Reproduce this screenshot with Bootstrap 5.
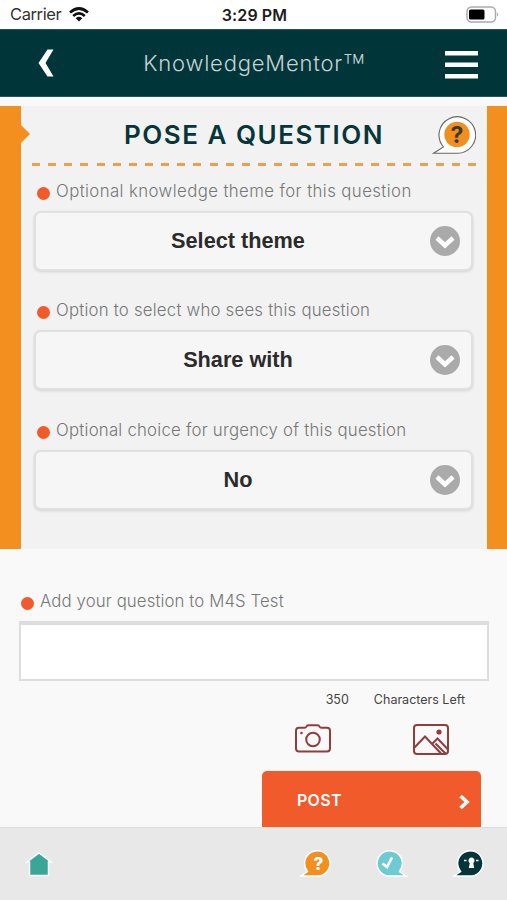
<!DOCTYPE html>
<html lang="en">
<head>
<meta charset="utf-8">
<meta name="viewport" content="width=device-width, initial-scale=1">
<title>KnowledgeMentor</title>
<link href="https://cdn.jsdelivr.net/npm/bootstrap@5.3.0/dist/css/bootstrap.min.css" rel="stylesheet">
<style>
body{background:#f9f9f9;font-family:Inter,"Open Sans",sans-serif;height:900px;overflow:hidden}
svg{display:block;flex:none}
.status{height:29px;background:#fff;font-size:16.5px;color:#333;display:grid;grid-template-columns:1fr auto 1fr;padding:0 8px 0 10px}
.status .carrier{letter-spacing:-.4px}
.status .clock{font-weight:600;color:#1c1c1c;font-size:16px;letter-spacing:.1px}
.topbar{height:68px;background:#003539;padding:0 29px 0 37px;border-top:1px solid #285458;border-bottom:1px solid #285458}
.topbar .brand{font-weight:300;font-size:22px;color:#c6d3d5;letter-spacing:.8px;white-space:nowrap;margin-left:8px}
.brand .tm{font-size:37px;font-weight:200;line-height:0;vertical-align:-10px;letter-spacing:0}
.panel{margin-top:9px;height:443px;border-left:21px solid #f28f1f;border-right:20px solid #f28f1f;background:#f2f2f2;padding:0 11px 0 11px}
.panel:before{content:"";position:absolute;left:0;top:19px;border:9.5px solid transparent;border-left:9px solid #f28f1f;border-right:0}
.heading{height:57px;padding:0 0 0 92px}
.heading h1{font-size:26px;font-weight:600;color:#07363a;letter-spacing:1.5px;white-space:nowrap}
.dashes{height:3px;width:444px;background:repeating-linear-gradient(90deg,#eba04a 0 8px,transparent 8px 16.15px)}
.fields{padding-top:13px}
.field-label{font-weight:300;font-size:16.8px;color:#777;height:24px;line-height:24px;white-space:nowrap}
.ls-a{letter-spacing:.4px}
.ls-b{letter-spacing:.21px}
.ls-c{letter-spacing:.22px}
.ls-d{letter-spacing:.1px}
.dot{width:13px;height:13px;border-radius:50%;background:#f15a2b;margin-right:6px;flex:none}
.picker{width:439px;height:60px;border:2px solid #e0e0e0;border-radius:7px;background:#f6f6f6;box-shadow:0 1px 3px #0002;font:bold 21.7px/1 "Liberation Sans",Arial,sans-serif;color:#2b2b2b;padding:0 11px 0 6px}
.field{height:119.3px;padding-left:5px}
.field .picker{margin:8px 0 0 -3px}
.ask{padding:40px 18px 0 19px}
.ask .field-label{padding-left:2px}
.entry{height:60px;border:2px solid #ddd;border-top:4px solid #ddd;border-radius:0;resize:none;background:#fff}
.counter{height:37px;padding-top:1px;font-size:12.5px;color:#444;gap:25px;padding-right:24px}
.media{height:53px;padding:6px 40px 0 276px}
.post{width:219px;height:56px;border-radius:5px 5px 0 0;border:0;background:#f15a2b;color:#fff;font-size:16px;font-weight:600;padding:2px 11px 0 35px;margin-right:8px}
.post span{letter-spacing:.3px}
.dock{height:73px;background:#e8e8e8;border-top:1px solid #ddd;padding:0 21px 0 25px}
.bubble-a{margin-right:41px}
.bubble-b{margin-right:44px}
</style>
<script src="https://cdn.jsdelivr.net/npm/bootstrap@5.3.0/dist/js/bootstrap.bundle.min.js"></script>
</head>
<body>
<div class="status align-items-center">
  <div class="d-flex align-items-center gap-2"><span class="carrier">Carrier</span>
    <svg width="20" height="15" viewBox="0 0 20 15" fill="none" stroke="#111" stroke-width="2.7"><path d="M1 5.5Q10-2.5 19 5.5M4.2 9Q10 3.9 15.8 9"/><path d="M6.7 11.2Q10 8.4 13.3 11.2L10 14.6Z" fill="#111" stroke="none"/></svg>
  </div>
  <span class="clock">3:29 PM</span>
  <svg class="ms-auto" width="33" height="17" viewBox="0 0 33 17"><rect x="1" y="1" width="28.5" height="15" rx="4.5" fill="#fff" stroke="#aaa" stroke-width="1.5"/><rect x="3" y="3.5" width="15.5" height="10" rx="1.5"/><path d="M31 6.5q2.400 2 0 4z" fill="#aaa"/></svg>
</div>
<header class="topbar d-flex align-items-center justify-content-between">
  <svg width="18" height="28" viewBox="0 0 18 28"><path d="M10.500 .5H16.500L8.500 14 16.500 27.500H10.500L1.500 14Z" fill="#fff"/></svg>
  <span class="brand">KnowledgeMentor<span class="tm">™</span></span>
  <svg class="mt-1" width="33" height="28" viewBox="0 0 33 28" fill="#fff"><path d="M0 0h33v4.500H0zM0 11.500h33V16H0zM0 23h33v4.500H0z"/></svg>
</header>
<main>
<section class="panel position-relative">
  <div class="heading d-flex align-items-center justify-content-between">
    <h1 class="m-0">POSE A QUESTION</h1>
    <svg width="44" height="40" viewBox="0 0 44 40"><path d="M1.500 38.300L11.500 32A18.300 18.300 0 1 1 25 38.300Z" fill="#fff" stroke="#666" stroke-width="1.1"/><circle cx="25" cy="19.500" r="12.700" fill="#f28f1f"/><text x="25" y="28" text-anchor="middle" font-family="Inter,sans-serif" font-weight="700" font-size="23" fill="#3d3b30">?</text></svg>
  </div>
  <div class="dashes"></div>
  <div class="fields">
    <div class="field"><div class="field-label d-flex"><i class="dot mt-2"></i><span class="ls-a">Optional knowledge theme for this question</span></div>
      <button class="picker d-flex align-items-center"><span class="flex-fill ps-1">Select theme</span><svg width="30" height="30" viewBox="0 0 30 30"><circle cx="15" cy="15" r="15" fill="#aaa"/><path d="M7 12l8 7.500 8-7.500" fill="none" stroke="#fff" stroke-width="4.500"/></svg></button></div>
    <div class="field"><div class="field-label d-flex"><i class="dot mt-2"></i><span class="ls-b">Option to select who sees this question</span></div>
      <button class="picker d-flex align-items-center"><span class="flex-fill ps-1">Share with</span><svg width="30" height="30" viewBox="0 0 30 30"><circle cx="15" cy="15" r="15" fill="#aaa"/><path d="M7 12l8 7.500 8-7.500" fill="none" stroke="#fff" stroke-width="4.500"/></svg></button></div>
    <div class="field"><div class="field-label d-flex"><i class="dot mt-2"></i><span class="ls-c">Optional choice for urgency of this question</span></div>
      <button class="picker d-flex align-items-center"><span class="flex-fill ps-1">No</span><svg width="30" height="30" viewBox="0 0 30 30"><circle cx="15" cy="15" r="15" fill="#aaa"/><path d="M7 12l8 7.500 8-7.500" fill="none" stroke="#fff" stroke-width="4.500"/></svg></button></div>
  </div>
</section>
<section class="ask">
  <div class="field-label d-flex"><i class="dot mt-2"></i><span class="ls-d">Add your question to M4S Test</span></div>
  <textarea class="entry d-block w-100 mt-2" aria-label="Question"></textarea>
  <div class="counter d-flex align-items-center justify-content-end"><span>350</span><span>Characters Left</span></div>
  <div class="media d-flex justify-content-between">
    <svg width="36" height="30" viewBox="0 0 36 30" fill="none" stroke="#913d3d" stroke-width="2"><path d="M4 3.800H9.500Q11 3.800 11.500 2.500Q12 1.200 13.500 1.200H22.500Q24 1.200 24.500 2.500Q25 3.800 26.500 3.800H32Q35 3.800 35 6.800V24.500Q35 27.500 32 27.500H4Q1 27.500 1 24.500V6.800Q1 3.800 4 3.800Z"/><circle cx="18" cy="15.500" r="6.800"/><circle cx="6.500" cy="9" r="1.300" fill="#913d3d" stroke="none"/></svg>
    <svg width="36" height="31" viewBox="0 0 36 31" fill="none" stroke="#913d3d" stroke-width="2"><rect x="1" y="1" width="34" height="29" rx="3"/><path d="M1.500 23.500L12 12.500 28 29.500M19 20L24.500 14.500 35 25.500M22.500 19.500L32.500 29.500"/><circle cx="26" cy="8" r="2.600" fill="#913d3d" stroke="none"/></svg>
  </div>
  <button class="post d-flex align-items-center justify-content-between ms-auto"><span>POST</span><svg class="mt-1" width="12" height="16" viewBox="0 0 12 16"><path d="M2.500 2L9 8l-6.500 6" fill="none" stroke="#fff" stroke-width="3.700"/></svg></button>
</section>
</main>
<footer class="dock d-flex align-items-center">
  <svg width="28" height="27" viewBox="0 0 28 27"><path d="M14 2L26 11H23.500V24.500H4.500V11H2Z" fill="#3aa698" stroke="#f6fffd" stroke-width="1.500"/></svg>
  <svg class="ms-auto bubble-a" width="34" height="28" viewBox="0 0 34 28"><path d="M2 26L8.500 21.500A12.700 12.700 0 1 1 20 26Z" fill="#f28f1f" stroke="#fff" stroke-width="1.500"/><text x="19.500" y="19.500" text-anchor="middle" font-family="Inter,sans-serif" font-weight="800" font-size="17" fill="#fff">?</text></svg>
  <svg class="bubble-b" width="34" height="28" viewBox="0 0 34 28"><path d="M32 26L25.500 21.500A12.700 12.700 0 1 0 14 26Z" fill="#6fcbd3" stroke="#fff" stroke-width="1.500"/><path d="M8.500 13.500l4.500 3.500 5-9.500" fill="none" stroke="#fff" stroke-width="2.600"/></svg>
  <svg width="34" height="28" viewBox="0 0 34 28"><path d="M2 26L8.500 21.500A12.700 12.700 0 1 1 20 26Z" fill="#05353a" stroke="#fff" stroke-width="1.500"/><path d="M16.800 18l1-5a3 3 0 1 1 3.400 0l1 5z" fill="#fff"/><path d="M12 10.500h2.500M24 10.500h2.500" stroke="#fff" stroke-width="1.600"/></svg>
</footer>
</body>
</html>
